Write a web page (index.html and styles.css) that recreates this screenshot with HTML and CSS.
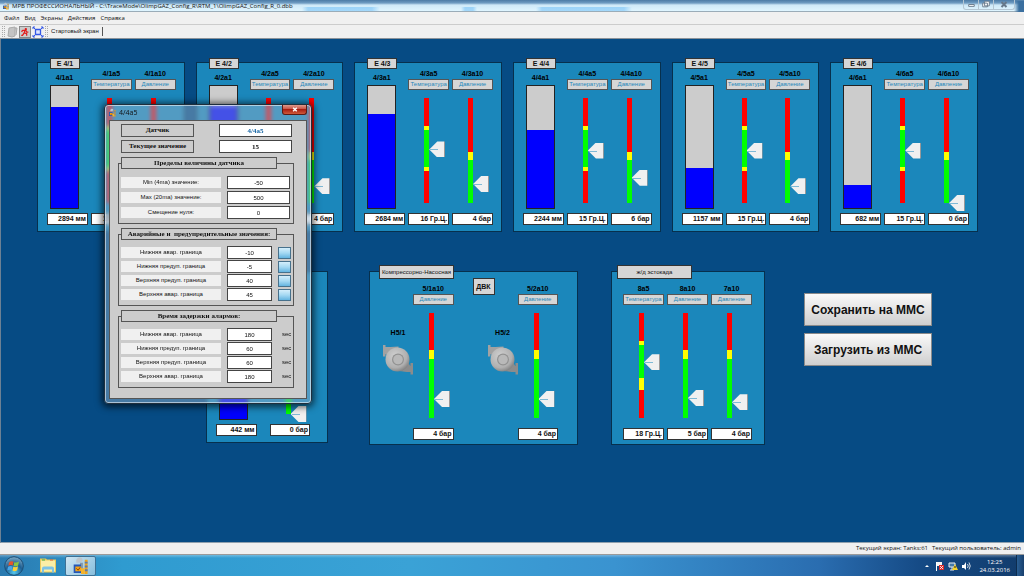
FILE: index.html
```html
<!DOCTYPE html>
<html lang="ru">
<head>
<meta charset="utf-8">
<title>МРВ ПРОФЕССИОНАЛЬНЫЙ</title>
<link rel="stylesheet" href="styles.css">
</head>
<body>
<svg class="defs" aria-hidden="true">
  <defs>
    <radialGradient id="metal" cx=".4" cy=".35" r=".7"><stop offset="0" stop-color="#d0d0d0"/><stop offset=".7" stop-color="#b0b0b0"/><stop offset="1" stop-color="#7d7d7d"/></radialGradient>
    <symbol id="pump" viewBox="0 0 30 30">
      <path d="M0 0h2.500v2h5l8-.5v5L5 14l-1-4-1.500-1v2.500H0z" fill="#a2a2a2"/>
      <path d="M30 29.500h-2.500V27h-4l-7-1 8-11 2 5 1 1v-3H30z" fill="#8c8c8c"/>
      <circle cx="14.500" cy="14.500" r="12" fill="url(#metal)"/>
      <circle cx="15" cy="14.500" r="6" fill="#929292"/>
      <circle cx="15" cy="14.500" r="4.800" fill="#b9b9b9"/>
    </symbol>
    <symbol id="plant" viewBox="0 0 16 18">
      <path d="M3 3q2-4 6-2l1 3-3 2-4 0z" fill="#bcc5cc"/>
      <path d="M12 3h3v15h-3z" fill="#f0a319"/><path d="M12 5h3v2h-3zM12 9h3v2h-3zM12 13h3v2h-3z" fill="#5d79a6"/>
      <path d="M7 6h3v7H7z" fill="#8296a6"/>
      <path d="M0 8h8v9H0z" fill="#2457b8"/><path d="M2 10h6v5H2z" fill="#f6a414"/><path d="M3 12l2 2 2-3" stroke="#8a3c00" fill="none"/>
      <path d="M8 12h4v6H8z" fill="#f6b32a"/>
    </symbol>
  </defs>
</svg>

<header class="titlebar">
  <svg class="app-icon" aria-hidden="true"><use href="#plant"/></svg>
  <h1 class="titlebar-text">МРВ ПРОФЕССИОНАЛЬНЫЙ - C:\TraceMode\OlimpGAZ_Config_R\RTM_1\OlimpGAZ_Config_R_0.dbb</h1>
  <div class="window-buttons">
    <button class="window-button" aria-label="Свернуть"><svg viewBox="0 0 15 9"><path d="M5 4.500h6v2H5z" fill="#fff" stroke="#66788a"/></svg></button>
    <button class="window-button" aria-label="Восстановить"><svg viewBox="0 0 15 9"><path d="M6 1h5v5H6zM4 3h5v4H4z" fill="#fff" stroke="#66788a"/></svg></button>
    <button class="window-button wide" aria-label="Закрыть"><svg viewBox="0 0 15 9"><path d="M5 2l5 5M10 2L5 7" stroke="#66788a" stroke-width="2"/></svg></button>
  </div>
</header>

<nav class="menubar">
  <button class="menu-item">Файл</button>
  <button class="menu-item">Вид</button>
  <button class="menu-item">Экраны</button>
  <button class="menu-item">Действия</button>
  <button class="menu-item">Справка</button>
</nav>

<div class="toolbar">
  <span class="grip"></span>
  <button class="tool" aria-label="Открыть"><svg viewBox="0 0 12 12"><path d="M3 2l6-1v9l-3 1-4-1zM9 2l2 0-1 7" fill="#c4c4c4" stroke="#aaa"/></svg></button>
  <button class="tool pressed" aria-label="Запуск"><svg viewBox="0 0 12 12"><circle cx="7" cy="2.500" r="1.400" fill="#e21b1b"/><path d="M3 4h4l1 2h2M6 4L5 7l3 1v2.500M5 7l-2 3H1.500M3 4L2 6" fill="none" stroke="#e21b1b" stroke-width="1.500"/></svg></button>
  <button class="tool" aria-label="Во весь экран"><svg viewBox="0 0 12 12"><path d="M3.500 3.500h5v5h-5z" fill="#dce4ff" stroke="#3558e6" stroke-width="1.300"/><path d="M1 1l2.500 2.500M11 1L8.500 3.500M1 11l2.500-2.500M11 11L8.500 8.500M1 3V1h2M9 1h2v2M1 9v2h2M9 11h2V9" stroke="#3558e6" fill="none"/></svg></button>
  <span class="grip"></span>
  <button class="start-screen">Стартовый экран</button>
</div>

<main class="mimic">
  <div class="tank-row">
    <section class="unit">
      <h2 class="tag">Е 4/1</h2>
      <div class="column"><div class="vessel"><span class="name">4/1a1</span><div class="tank"><div class="fill" style="height:83%"></div></div></div><output class="value">2894 мм</output></div>
      <div class="column"><label class="name" for="t1">4/1a5</label><button class="kind">Температура</button><input class="gauge temperature" id="t1" type="range" value="50"><output class="value">15 Гр.Ц.</output></div>
      <div class="column"><label class="name" for="p1">4/1a10</label><button class="kind">Давление</button><input class="gauge pressure" id="p1" type="range" value="84"><output class="value">4 бар</output></div>
    </section>
    <section class="unit">
      <h2 class="tag">Е 4/2</h2>
      <div class="column"><div class="vessel"><span class="name">4/2a1</span><div class="tank"><div class="fill" style="height:84%"></div></div></div><output class="value">2894 мм</output></div>
      <div class="column"><label class="name" for="t2">4/2a5</label><button class="kind">Температура</button><input class="gauge temperature" id="t2" type="range" value="50"><output class="value">15 Гр.Ц.</output></div>
      <div class="column"><label class="name" for="p2">4/2a10</label><button class="kind">Давление</button><input class="gauge pressure" id="p2" type="range" value="84"><output class="value">4 бар</output></div>
    </section>
    <section class="unit">
      <h2 class="tag">Е 4/3</h2>
      <div class="column"><div class="vessel"><span class="name">4/3a1</span><div class="tank"><div class="fill" style="height:77%"></div></div></div><output class="value">2684 мм</output></div>
      <div class="column"><label class="name" for="t3">4/3a5</label><button class="kind">Температура</button><input class="gauge temperature" id="t3" type="range" value="49"><output class="value">16 Гр.Ц.</output></div>
      <div class="column"><label class="name" for="p3">4/3a10</label><button class="kind">Давление</button><input class="gauge pressure" id="p3" type="range" value="82"><output class="value">4 бар</output></div>
    </section>
    <section class="unit">
      <h2 class="tag">Е 4/4</h2>
      <div class="column"><div class="vessel"><span class="name">4/4a1</span><div class="tank"><div class="fill" style="height:64%"></div></div></div><output class="value">2244 мм</output></div>
      <div class="column"><label class="name" for="t4">4/4a5</label><button class="kind">Температура</button><input class="gauge temperature" id="t4" type="range" value="50"><output class="value">15 Гр.Ц.</output></div>
      <div class="column"><label class="name" for="p4">4/4a10</label><button class="kind">Давление</button><input class="gauge pressure" id="p4" type="range" value="76"><output class="value">6 бар</output></div>
    </section>
    <section class="unit">
      <h2 class="tag">Е 4/5</h2>
      <div class="column"><div class="vessel"><span class="name">4/5a1</span><div class="tank"><div class="fill" style="height:33%"></div></div></div><output class="value">1157 мм</output></div>
      <div class="column"><label class="name" for="t5">4/5a5</label><button class="kind">Температура</button><input class="gauge temperature" id="t5" type="range" value="50"><output class="value">15 Гр.Ц.</output></div>
      <div class="column"><label class="name" for="p5">4/5a10</label><button class="kind">Давление</button><input class="gauge pressure" id="p5" type="range" value="84"><output class="value">4 бар</output></div>
    </section>
    <section class="unit">
      <h2 class="tag">Е 4/6</h2>
      <div class="column"><div class="vessel"><span class="name">4/6a1</span><div class="tank"><div class="fill" style="height:19%"></div></div></div><output class="value">682 мм</output></div>
      <div class="column"><label class="name" for="t6">4/6a5</label><button class="kind">Температура</button><input class="gauge temperature" id="t6" type="range" value="50"><output class="value">15 Гр.Ц.</output></div>
      <div class="column"><label class="name" for="p6">4/6a10</label><button class="kind">Давление</button><input class="gauge pressure" id="p6" type="range" value="100"><output class="value">0 бар</output></div>
    </section>
  </div>

  <div class="lower-row">
    <section class="unit drain">
      <div class="column"><div class="vessel"><div class="tank"><div class="fill" style="height:40%"></div></div></div><output class="value">442 мм</output></div>
      <div class="column"><input class="gauge pressure" type="range" value="100" aria-label="Давление"><output class="value">0 бар</output></div>
    </section>
    <section class="unit pumps">
      <h2 class="tag caption">Компрессорно-Насосная</h2>
      <div class="pump-column"><span class="name">Н5/1</span><svg class="pump"><use href="#pump"/></svg></div>
      <div class="column"><label class="name" for="c1">5/1a10</label><button class="kind">Давление</button><input class="gauge pump-pressure" id="c1" type="range" value="82"><output class="value">4 бар</output></div>
      <div class="pump-column second"><button class="dvk">ДВК</button><span class="name">Н5/2</span><svg class="pump"><use href="#pump"/></svg></div>
      <div class="column"><label class="name" for="c2">5/2a10</label><button class="kind">Давление</button><input class="gauge pump-pressure" id="c2" type="range" value="82"><output class="value">4 бар</output></div>
    </section>
    <section class="unit rail">
      <h2 class="tag caption">ж/д эстокада</h2>
      <div class="column"><label class="name" for="r1">8a5</label><button class="kind">Температура</button><input class="gauge rail-temperature" id="r1" type="range" value="47"><output class="value">18 Гр.Ц.</output></div>
      <div class="column"><label class="name" for="r2">8a10</label><button class="kind">Давление</button><input class="gauge pump-pressure" id="r2" type="range" value="81"><output class="value">5 бар</output></div>
      <div class="column"><label class="name" for="r3">7a10</label><button class="kind">Давление</button><input class="gauge pump-pressure" id="r3" type="range" value="85"><output class="value">4 бар</output></div>
    </section>
    <div class="actions">
      <button class="action">Сохранить на ММС</button>
      <button class="action">Загрузить из ММС</button>
    </div>
  </div>

  <form class="dialog" role="dialog" aria-labelledby="dialog-title">
    <div class="dialog-title">
      <svg class="dialog-icon" aria-hidden="true"><use href="#plant"/></svg>
      <h2 class="dialog-name" id="dialog-title">4/4a5</h2>
      <button class="dialog-close" type="button" aria-label="Закрыть"><svg viewBox="0 0 24 10"><path d="M10.500 3l4 4M14.500 3l-4 4" stroke="#fff" stroke-width="1.600"/></svg></button>
    </div>
    <div class="dialog-body">
      <div class="summary">
        <label class="heading" for="sensor">Датчик</label><input class="field strong sensor" id="sensor" value="4/4a5">
        <label class="heading" for="current">Текущее значение</label><input class="field strong" id="current" value="15">
      </div>
      <fieldset class="group">
        <legend class="heading legend">Пределы величины датчика</legend>
        <div class="rows limits">
          <label class="caption-cell" for="min">Min (4ma) значение:</label><input class="field" id="min" value="-50">
          <label class="caption-cell" for="max">Max (20ma) значение:</label><input class="field" id="max" value="500">
          <label class="caption-cell" for="zero">Смещение нуля:</label><input class="field" id="zero" value="0">
        </div>
      </fieldset>
      <fieldset class="group">
        <legend class="heading legend">Аварийные и&nbsp; предупредительные значения:</legend>
        <div class="rows alarms">
          <label class="caption-cell" for="a1">Нижняя авар. граница</label><input class="field" id="a1" value="-10"><button class="apply" type="button" aria-label="Записать"></button>
          <label class="caption-cell" for="a2">Нижняя предуп. граница</label><input class="field" id="a2" value="-5"><button class="apply" type="button" aria-label="Записать"></button>
          <label class="caption-cell" for="a3">Верхняя предуп. граница</label><input class="field" id="a3" value="40"><button class="apply" type="button" aria-label="Записать"></button>
          <label class="caption-cell" for="a4">Верхняя авар. граница</label><input class="field" id="a4" value="45"><button class="apply" type="button" aria-label="Записать"></button>
        </div>
      </fieldset>
      <fieldset class="group">
        <legend class="heading legend">Время задержки алармов:</legend>
        <div class="rows alarms">
          <label class="caption-cell" for="d1">Нижняя авар. граница</label><input class="field" id="d1" value="180"><span class="unit-name">sec</span>
          <label class="caption-cell" for="d2">Нижняя предуп. граница</label><input class="field" id="d2" value="60"><span class="unit-name">sec</span>
          <label class="caption-cell" for="d3">Верхняя предуп. граница</label><input class="field" id="d3" value="60"><span class="unit-name">sec</span>
          <label class="caption-cell" for="d4">Верхняя авар. граница</label><input class="field" id="d4" value="180"><span class="unit-name">sec</span>
        </div>
      </fieldset>
    </div>
  </form>
</main>

<div class="statusbar"><span>Текущий экран: Tanks:61</span><span>Текущий пользователь: admin</span></div>

<footer class="taskbar">
  <button class="start" aria-label="Пуск"><svg viewBox="0 0 20 20">
    <defs><radialGradient id="orb" cx=".5" cy=".85" r=".9"><stop offset="0" stop-color="#53c8ef"/><stop offset=".5" stop-color="#1d5f94"/><stop offset="1" stop-color="#8fb6cc"/></radialGradient></defs>
    <circle cx="10" cy="10" r="9.300" fill="url(#orb)" stroke="#1a4c74"/>
    <path d="M5 6.500q2.500-2 4.500-.7L8.700 9.500Q6.700 8.500 4.300 10z" fill="#e8562a"/><path d="M10.300 6.200q2.200 1 4.700-.7l-.8 4q-2.500 1.500-4.700.4z" fill="#8cc63f"/>
    <path d="M4 10.800q2.500-1.500 4.500-.4l-.8 3.700q-2-1-4.400.5z" fill="#4aa5e8"/><path d="M9.300 10.800q2.200 1 4.700-.5l-.8 4q-2.500 1.500-4.700.3z" fill="#fbd03a"/>
  </svg></button>
  <button class="task explorer" aria-label="Проводник"><svg viewBox="0 0 18 16"><path d="M1 1h6l1 1h9v13H1z" fill="#e8c95c"/><path d="M2 3h14v11H2z" fill="#fbeea6"/><path d="M3 2h3v1H3z" fill="#3cb14a"/><path d="M11 2h3v1h-3z" fill="#dd5a3a"/><path d="M3 11q0-2 2-2h8q2 0 2 2v4h-2v-3H5v3H3z" fill="#7cc3e6"/></svg></button>
  <button class="task active" aria-label="МРВ"><svg viewBox="0 0 16 18"><use href="#plant"/></svg></button>
  <div class="tray">
    <svg class="tray-icon" viewBox="0 0 10 10"><path d="M3 6l2-2 2 2z" fill="#fff"/></svg>
    <svg class="tray-icon" viewBox="0 0 10 10"><path d="M1.500 1v9" stroke="#fff"/><path d="M2 1h5v4H2z" fill="#f5f5f5"/><path d="M4 4h5v5H4z" fill="#d92b2b"/><path d="M5 5l3 3M8 5L5 8" stroke="#fff" stroke-width=".8"/></svg>
    <svg class="tray-icon" viewBox="0 0 10 10"><path d="M1 2h6v4H1zM4 6v3M2 9h4" stroke="#e8eef4" fill="#4478a8"/><path d="M7 3l3 6H4z" fill="#f9d428"/><path d="M7 5v2" stroke="#222"/></svg>
    <svg class="tray-icon" viewBox="0 0 10 10"><path d="M1 4h2l2-3v8L3 7H1z" fill="#fff"/><path d="M6.500 3q1.500 2 0 4M8 1.500q2.500 3.500 0 7" stroke="#fff" fill="none" stroke-width=".8"/></svg>
    <time class="clock">12:25<br>24.03.2016</time>
    <button class="show-desktop" aria-label="Показать рабочий стол"></button>
  </div>
</footer>
</body>
</html>
```
FILE: styles.css
```css
* { box-sizing: border-box; }

body {
  margin: 0;
  min-height: 100vh;
  display: flex;
  flex-direction: column;
  font: 6px/10px "Open Sans", sans-serif;
  color: #111;
  overflow: hidden;
}

button, input { font: inherit; color: inherit; margin: 0; padding: 0; border: 0; background: none; }
h1, h2 { margin: 0; font: inherit; }
.defs { position: absolute; width: 0; height: 0; }

.titlebar {
  display: flex;
  align-items: center;
  height: 12px;
  padding-left: 3px;
  background:
    linear-gradient(90deg, transparent, #3a6f9f 5px) right / 10px 11px no-repeat,
    linear-gradient(90deg, transparent, rgba(90, 180, 245, .45) 6px 70px, transparent) 302px 7px / 78px 4px no-repeat,
    linear-gradient(90deg, transparent, rgba(90, 180, 245, .45) 4px 12px, transparent) 461px 7px / 16px 4px no-repeat,
    linear-gradient(90deg, transparent, rgba(90, 180, 245, .45) 6px 88px, transparent) 536px 7px / 96px 4px no-repeat,
    linear-gradient(#4c7ba6, #6f9cc2 3px, #cfe9f8 5px, #dff5ff 11px, #9aacb8 11px);
}
.app-icon { width: 6px; height: 8px; margin-right: 3px; }
.titlebar-text { flex: 1; white-space: nowrap; }
.window-buttons { display: flex; align-self: flex-start; margin-right: 9px; border: 1px solid #b4c6d3; border-top: 0; border-radius: 0 0 3px 3px; }
.window-button { width: 15px; height: 9px; border-right: 1px solid #b4c6d3; }
.window-button.wide { width: 20px; border: 0; }
.window-button svg { display: block; width: 100%; height: 9px; }

.menubar { display: flex; gap: 5px; height: 13px; padding-left: 4px; background: #f0f0f0; border-bottom: 1px solid #ccc; }
.menu-item { font-size: 6px; }
.toolbar { display: flex; align-items: center; gap: 1px; height: 14px; padding-left: 2px; background: #f0f0f0; border-bottom: 1px solid #8b9299; }
.grip { width: 3px; height: 11px; border-left: 1px dotted #aaa; border-right: 1px dotted #aaa; }
.tool { width: 12px; height: 12px; }
.tool svg { display: block; width: 100%; height: 100%; }
.tool.pressed { background: #ccc; border: 1px solid #888; }
.start-screen { padding: 0 3px 0 2px; border-right: 1px solid #555; font: 6px/9px "Liberation Sans", sans-serif; }

/* process mimic */
.mimic {
  position: relative;
  flex: 1;
  padding: 23px 46px 0 36px;
  background: #064b84;
  border-left: 1px solid #6d8194;
  border-bottom: 1px solid #8fa0ae;
  font-family: "Liberation Sans", sans-serif;
}
.tank-row { display: grid; grid-template-columns: repeat(6, 1fr); gap: 11px; }
.unit {
  position: relative;
  display: grid;
  grid-template-columns: repeat(3, 1fr);
  gap: 3px;
  padding: 6px 8px 6px 9px;
  background: #1b87bb;
  border: 1px solid #07304d;
}
.tag {
  position: absolute;
  top: -5px;
  left: 12px;
  width: 30px;
  height: 11px;
  background: #d6d6d6;
  border: 1px solid #333;
  font: bold 7px/9px "Liberation Sans", sans-serif;
  text-align: center;
}
.column { display: flex; flex-direction: column; justify-content: flex-end; min-width: 0; }
.name { display: block; height: 10px; font: bold 7px/10px "Liberation Sans", sans-serif; text-align: center; color: #000; }
.kind { height: 11px; background: #d6d6d6; border: 1px solid #555; font: 6px/9px "Liberation Sans", sans-serif; color: #2688bb; }
.value { display: block; height: 12px; margin-top: 2px; padding-right: 1px; background: #fff; border: 1px solid #333; font: bold 7px/10px "Liberation Sans", sans-serif; text-align: right; white-space: nowrap; color: #111; }
.vessel { width: 35px; margin-bottom: 2px; }
.vessel .name { margin-bottom: 2px; }
.tank { display: flex; align-items: flex-end; height: 124px; margin: 0 3px; background: #ccc; border: 1px solid #222; }
.fill { width: 100%; background: #0000fe; }

/* the scale is a strip on the left, the thumb points at it from the right */
.gauge {
  appearance: none;
  writing-mode: vertical-lr;
  width: 21px;
  height: 121px;
  margin-left: 16px;
  padding-left: 5px;
  background-repeat: no-repeat;
  background-position: left center;
  background-size: 5px 105px;
}
.gauge::-webkit-slider-thumb {
  appearance: none;
  width: 16px;
  height: 16px;
  background: linear-gradient(#7eb9d6, #7eb9d6) 1px 8px / 8px 1px no-repeat, linear-gradient(90deg, #f0f0f0 15px, #999 15px);
  clip-path: polygon(0 50%, 50% 0, 100% 0, 100% 100%, 50% 100%);
}
.temperature { background-image: linear-gradient(#f00 28px, #ff0 28px 32px, #0f0 32px 69px, #ff0 69px 73px, #f00 73px); }
.pressure { background-image: linear-gradient(#f00 54px, #ff0 54px 62px, #0f0 62px); }
.pump-pressure { background-image: linear-gradient(#f00 37px, #ff0 37px 46px, #0f0 46px); }
.rail-temperature { background-image: linear-gradient(#f00 28px, #ff0 28px 32px, #0f0 32px 65px, #ff0 65px 77px, #f00 77px); }

.lower-row { display: grid; grid-template-columns: 122fr 250fr 187fr 167fr; align-items: start; margin: 39px 46px 0 169px; }
.lower-row .unit { height: 174px; padding-bottom: 4px; }
.drain { grid-template-columns: 1fr 1fr; column-gap: 13px; }
.lower-row .drain { height: 172px; padding: 0 17px 6px 9px; }
.pumps { margin-left: 41px; display: flex; gap: 0; }
.lower-row .pumps { padding-left: 10px; padding-right: 19px; }
.pumps .column { flex: 1; }
.rail { margin-left: 33px; }
.lower-row .rail { padding-left: 11px; padding-right: 12px; }
.caption { top: -7px; left: 9px; width: 75px; height: 14px; font: 6px/12px "Liberation Sans", sans-serif; white-space: nowrap; }
.rail .caption { left: 5px; }
.pump-column { display: flex; flex-direction: column; justify-content: flex-end; align-items: flex-end; width: 33px; padding-bottom: 65px; }
.pump-column.second { width: 45px; margin-left: 19px; }
.pump-column .name { width: 30px; margin-bottom: 7px; }
.pump { width: 30px; height: 30px; }
.dvk { align-self: flex-start; width: 22px; height: 17px; margin-bottom: auto; background: #d6d6d6; border: 1px solid #333; font: bold 7px/14px "Liberation Sans", sans-serif; }

.actions { display: flex; flex-direction: column; gap: 7px; margin-left: 39px; padding-top: 22px; }
.action { height: 33px; background: linear-gradient(#fafafa, #e4e4e4 50%, #cfcfcf); border: 1px solid #8a8a8a; font: bold 12px/16px "Liberation Sans", sans-serif; white-space: nowrap; }

/* sensor dialog */
.dialog {
  position: absolute;
  top: 65px;
  left: 103px;
  width: 208px;
  padding: 0 4px 4px;
  border: 1px solid #1f2f3d;
  border-radius: 4px;
  background: rgba(150, 180, 205, .45);
  backdrop-filter: blur(2px);
  box-shadow: inset 0 0 0 1px rgba(255, 255, 255, .55), 0 1px 7px 2px rgba(0, 0, 0, .65);
}
.dialog-title { display: flex; align-items: center; height: 15px; }
.dialog-icon { width: 7px; height: 9px; margin-right: 3px; }
.dialog-name { flex: 1; font: 7px/10px "Open Sans", sans-serif; }
.dialog-close { align-self: flex-start; width: 25px; height: 10px; background: linear-gradient(#dc9a8d, #c8493a 50%, #a91f12 50%, #cf5a3c); border: 1px solid #5c1a14; border-top: 0; border-radius: 0 0 3px 3px; }
.dialog-close svg { display: block; width: 100%; height: 9px; }
.dialog-body { padding: 3px 12px 10px 8px; background: #ccc; border: 1px solid #555; }
.summary { display: grid; grid-template-columns: 73px 73px; justify-content: space-between; row-gap: 3px; padding: 0 2px 0 3px; }
.heading { height: 13px; border: 1px solid #555; background: #ccc; font: bold 7px/11px "Liberation Serif", serif; text-align: center; white-space: nowrap; }
.field { width: 100%; min-width: 0; height: 13px; background: #fff; border: 1px solid #444; font: 6px/11px "Liberation Sans", sans-serif; text-align: center; }
.field.strong { font: bold 7px/11px "Liberation Serif", serif; }
.field.sensor { color: #1766a5; }
.group { min-width: 0; margin: 4px 0 0; padding: 0 3px 4px 2px; border: 1px solid #555; }
.legend { display: flex; justify-content: center; width: 156px; height: 12px; padding: 0; line-height: 10px; text-align: left; }
.rows { display: grid; align-items: center; column-gap: 6px; padding-top: 7px; }
.limits { grid-template-columns: 100px 1fr; row-gap: 2px; }
.alarms { grid-template-columns: 100px 45px 1fr; row-gap: 1px; padding-top: 6px; }
.caption-cell { height: 11px; background: #f0f0f0; font: 6px/11px "Liberation Sans", sans-serif; text-align: center; white-space: nowrap; }
.apply { width: 13px; height: 12px; background: linear-gradient(#d4eefb, #a5d9f3 50%, #64b4e0); border: 1px solid #47718c; }
.unit-name { padding-left: 4px; font: 6px/11px "Liberation Sans", sans-serif; }

.statusbar { display: flex; justify-content: flex-end; gap: 4px; height: 12px; padding-right: 3px; background: #f0f0f0; border-bottom: 1px solid #9a9a9a; line-height: 11px; }

.taskbar {
  display: flex;
  align-items: center;
  height: 21px;
  padding-left: 4px;
  background: linear-gradient(rgba(255, 255, 255, .3), rgba(255, 255, 255, 0) 3px), linear-gradient(90deg, #2a7ab0, #2f9bd0 12%, #3aa2d6 40%, #3a93d0 60%, #2a6db0 80%, #154a85 90%, #123c6c);
}
.start { width: 20px; height: 20px; }
.start svg { display: block; }
.task { display: flex; align-items: center; justify-content: center; width: 31px; height: 20px; }
.explorer { margin: 0 2px 0 8px; }
.task svg { width: 18px; height: 17px; }
.task.active { background: linear-gradient(135deg, #cfe6f3, #86bedd); border: 1px solid #3d7195; border-radius: 2px; }
.tray { display: flex; align-items: center; gap: 3px; margin-left: auto; color: #fff; }
.tray-icon { width: 10px; height: 10px; }
.clock { margin-left: 5px; font-size: 6px; line-height: 8px; text-align: center; }
.show-desktop { width: 8px; height: 21px; margin-left: 3px; background: linear-gradient(90deg, #2a5f94, #183f6c); border-left: 1px solid #0d2c4e; }
```
